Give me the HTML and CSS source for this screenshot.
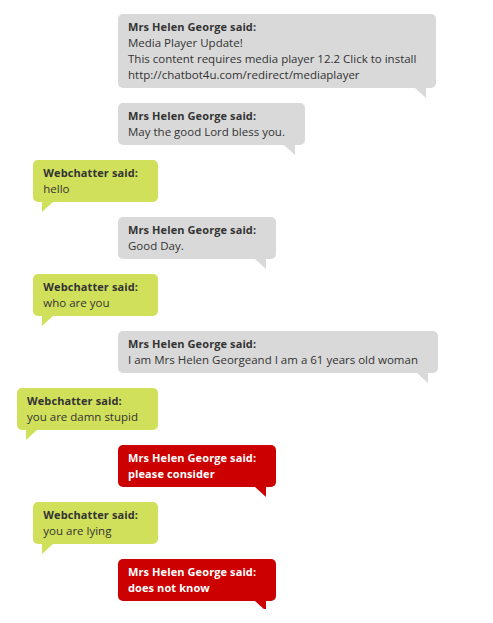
FILE: index.html
```html
<!DOCTYPE html>
<html>
<head>
<meta charset="utf-8">
<link rel="stylesheet" href="styles.css">
</head>
<body>
<div class="chat">
  <div class="row bot">
    <div class="bubble gray">
      <div class="who">Mrs Helen George said:</div>
      <div class="text">Media Player Update!<br>This content requires media player 12.2 Click to install<br>http://chatbot4u.com/redirect/mediaplayer</div>
    </div>
  </div>
  <div class="row bot">
    <div class="bubble gray">
      <div class="who">Mrs Helen George said:</div>
      <div class="text">May the good Lord bless you.</div>
    </div>
  </div>
  <div class="row user">
    <div class="bubble green">
      <div class="who">Webchatter said:</div>
      <div class="text">hello</div>
    </div>
  </div>
  <div class="row bot">
    <div class="bubble gray">
      <div class="who">Mrs Helen George said:</div>
      <div class="text">Good Day.</div>
    </div>
  </div>
  <div class="row user">
    <div class="bubble green">
      <div class="who">Webchatter said:</div>
      <div class="text">who are you</div>
    </div>
  </div>
  <div class="row bot">
    <div class="bubble gray">
      <div class="who">Mrs Helen George said:</div>
      <div class="text">I am Mrs Helen Georgeand I am a 61 years old woman</div>
    </div>
  </div>
  <div class="row user">
    <div class="bubble green">
      <div class="who">Webchatter said:</div>
      <div class="text">you are damn stupid</div>
    </div>
  </div>
  <div class="row bot">
    <div class="bubble red">
      <div class="who">Mrs Helen George said:</div>
      <div class="text">please consider</div>
    </div>
  </div>
  <div class="row user">
    <div class="bubble green">
      <div class="who">Webchatter said:</div>
      <div class="text">you are lying</div>
    </div>
  </div>
  <div class="row bot">
    <div class="bubble red">
      <div class="who">Mrs Helen George said:</div>
      <div class="text">does not know</div>
    </div>
  </div>
</div>
</body>
</html>
```
FILE: styles.css
```css
html, body {
  margin: 0;
  background: #ffffff;
}
body {
  padding: 14px 8px 8px 8px;
  font-family: "Open Sans", "DejaVu Sans", sans-serif;
  font-size: 11.5px;
  line-height: 16px;
  color: #333333;
}
.chat {
  display: flex;
  flex-direction: column;
  gap: 15px;
}
.row {
  display: flex;
}
.row.bot {
  padding-left: 110px;
}
.row.user {
  width: 150px;
  justify-content: flex-end;
}
.bubble {
  position: relative;
  padding: 5px 20px 5px 10px;
  border-radius: 5px;
  white-space: nowrap;
}
.bubble::after {
  content: "";
  position: absolute;
  top: 100%;
  width: 0;
  height: 0;
  border-style: solid;
}
.bot .bubble::after {
  right: 10px;
  border-width: 10px 0 0 11px;
}
.user .bubble::after {
  left: 9px;
  border-width: 10px 11px 0 0;
}
.who {
  font-weight: bold;
  font-size: 11px;
  letter-spacing: 0.1px;
}
.gray {
  background: #d9d9d9;
}
.gray::after {
  border-color: #d9d9d9 transparent transparent transparent;
}
.green {
  background: #d1e05b;
}
.green::after {
  border-color: #d1e05b transparent transparent transparent;
}
.red {
  background: #cc0000;
  color: #ffffff;
  font-weight: bold;
}
.red .text {
  font-size: 11px;
  letter-spacing: 0.1px;
}
.red::after {
  border-color: #cc0000 transparent transparent transparent;
}
```
